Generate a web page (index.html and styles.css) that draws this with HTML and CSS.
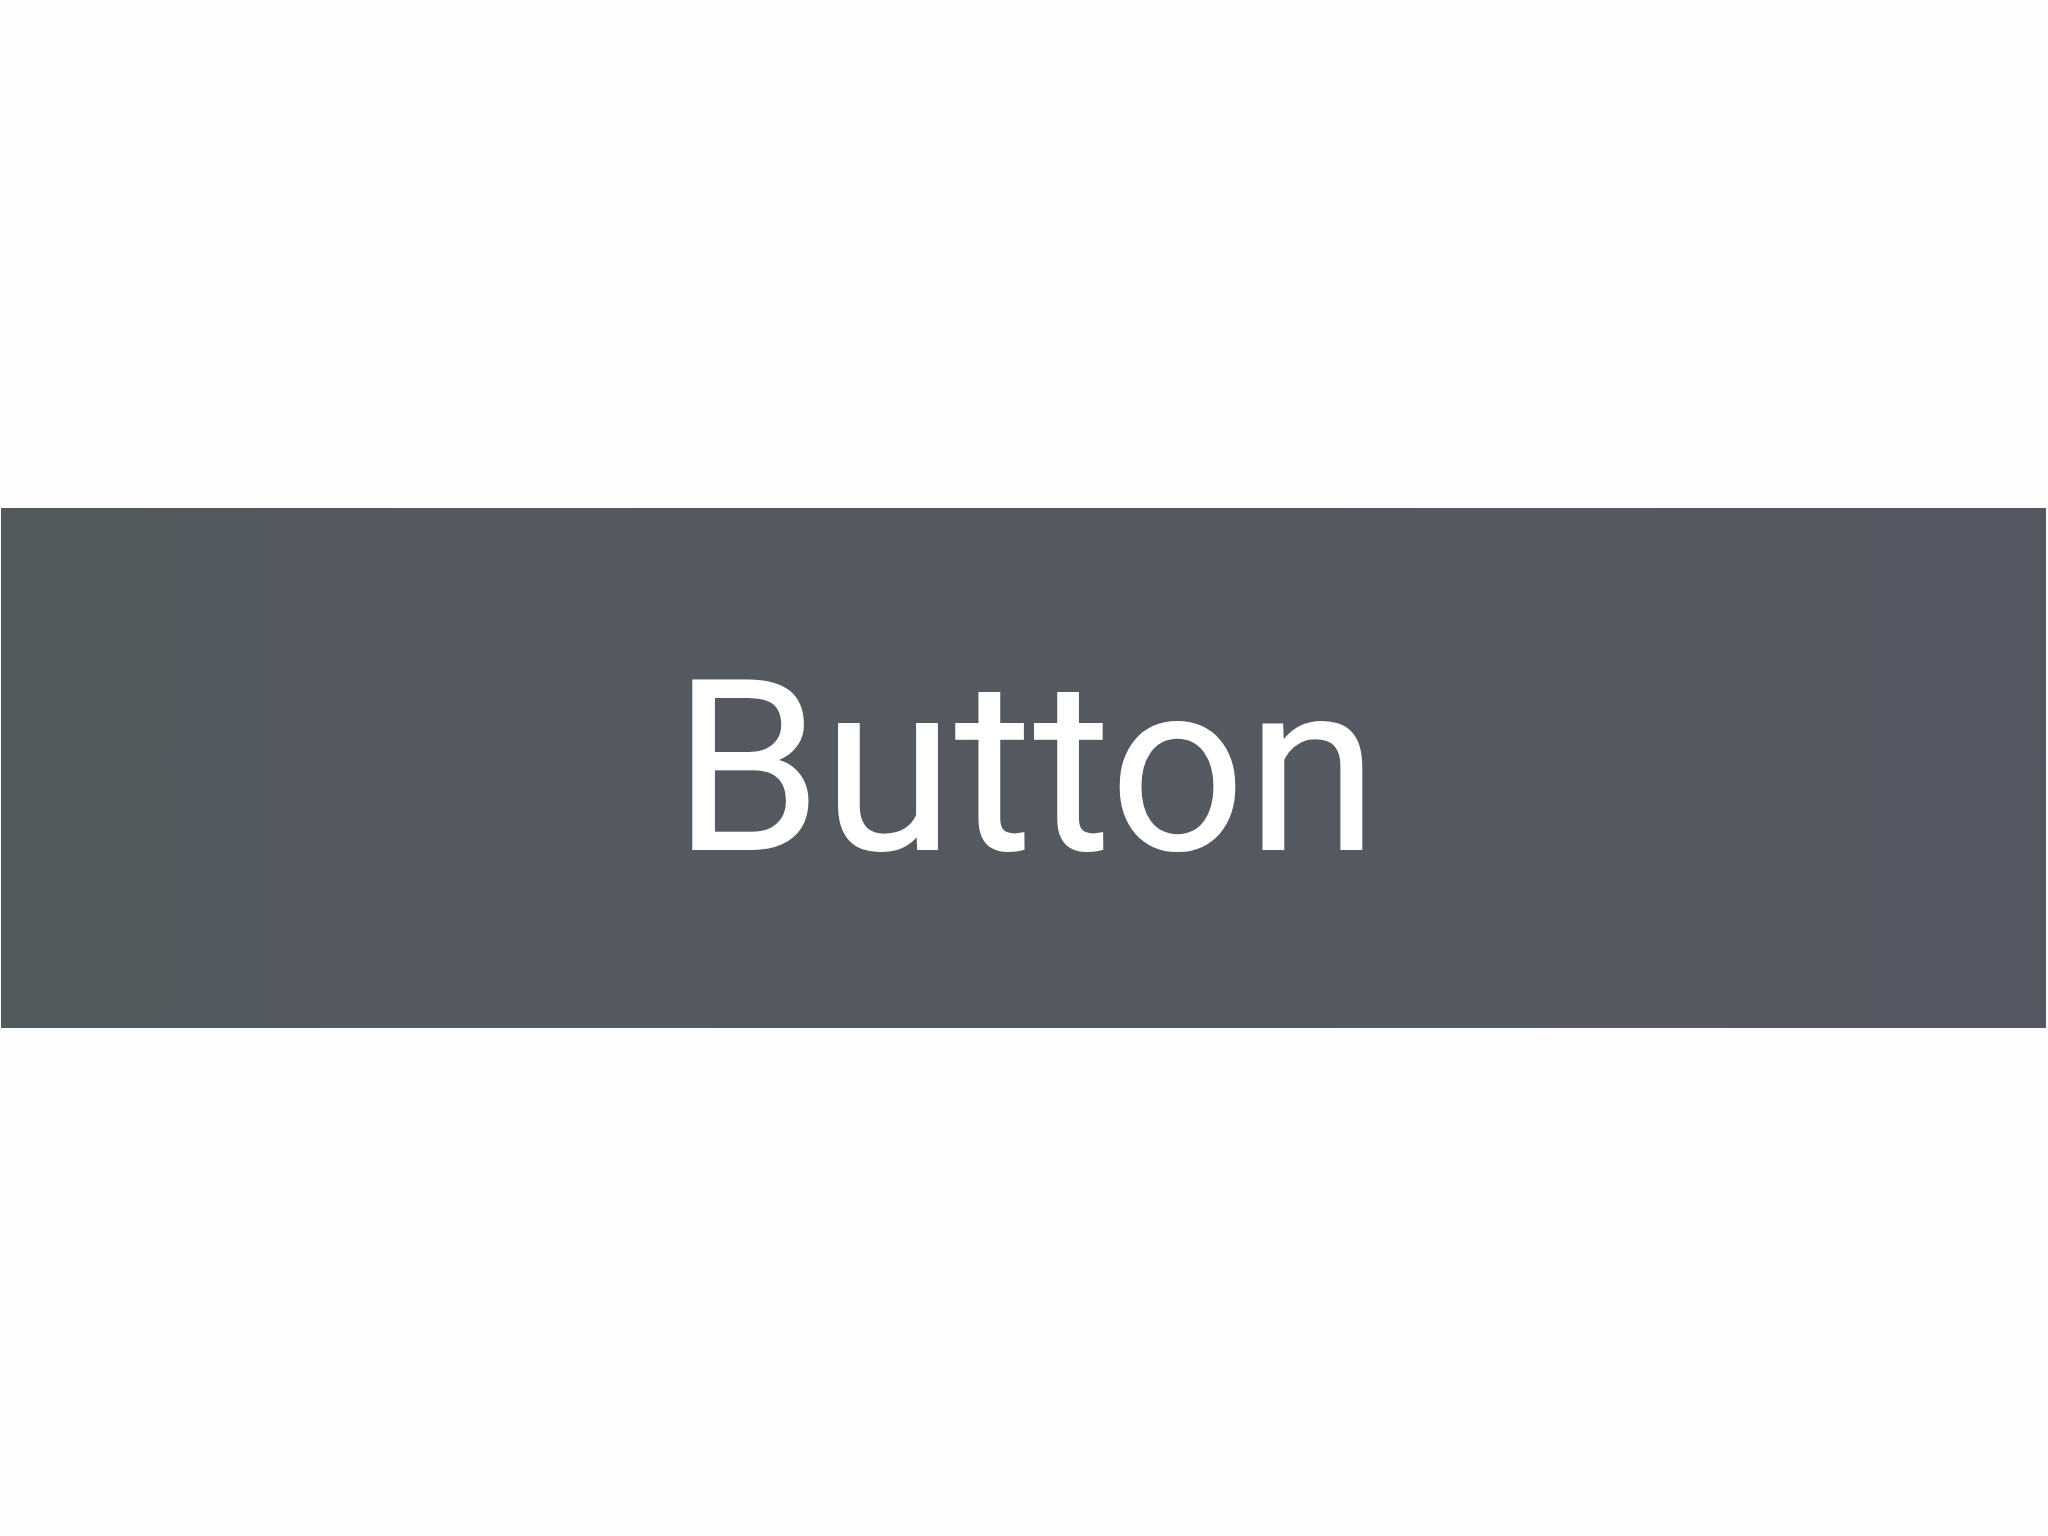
FILE: index.html
```html
<!DOCTYPE html>
<html lang="en">

<head>
    <meta charset="UTF-8">
    <meta name="viewport" content="width=device-width, initial-scale=1.0">
    <title>Button</title>
    <link rel="stylesheet" href="styles.css">
</head>

<body>
    <div class="container">
        <button class="btn">Button</button>
    </div>
</body>

</html>
```
FILE: styles.css
```css
* {
    margin: 0;
    padding: 0;
    box-sizing: border-box;
}

body {
    background: #fdfdfd;
    font-family: Roboto, "Noto Sans", sans-serif;
}

.container {
    height: 100vh;
    display: flex;
    align-items: center;
    padding: 0 2px 0 1px;
}

.btn {
    width: 100%;
    height: 520px;
    border: none;
    background: linear-gradient(90deg, #535a5e, #555862);
    color: #ffffff;
    font-family: Roboto, "Noto Sans", sans-serif;
    font-size: 240px;
    font-weight: 400;
    padding-left: 4px;
    cursor: pointer;
}
```
